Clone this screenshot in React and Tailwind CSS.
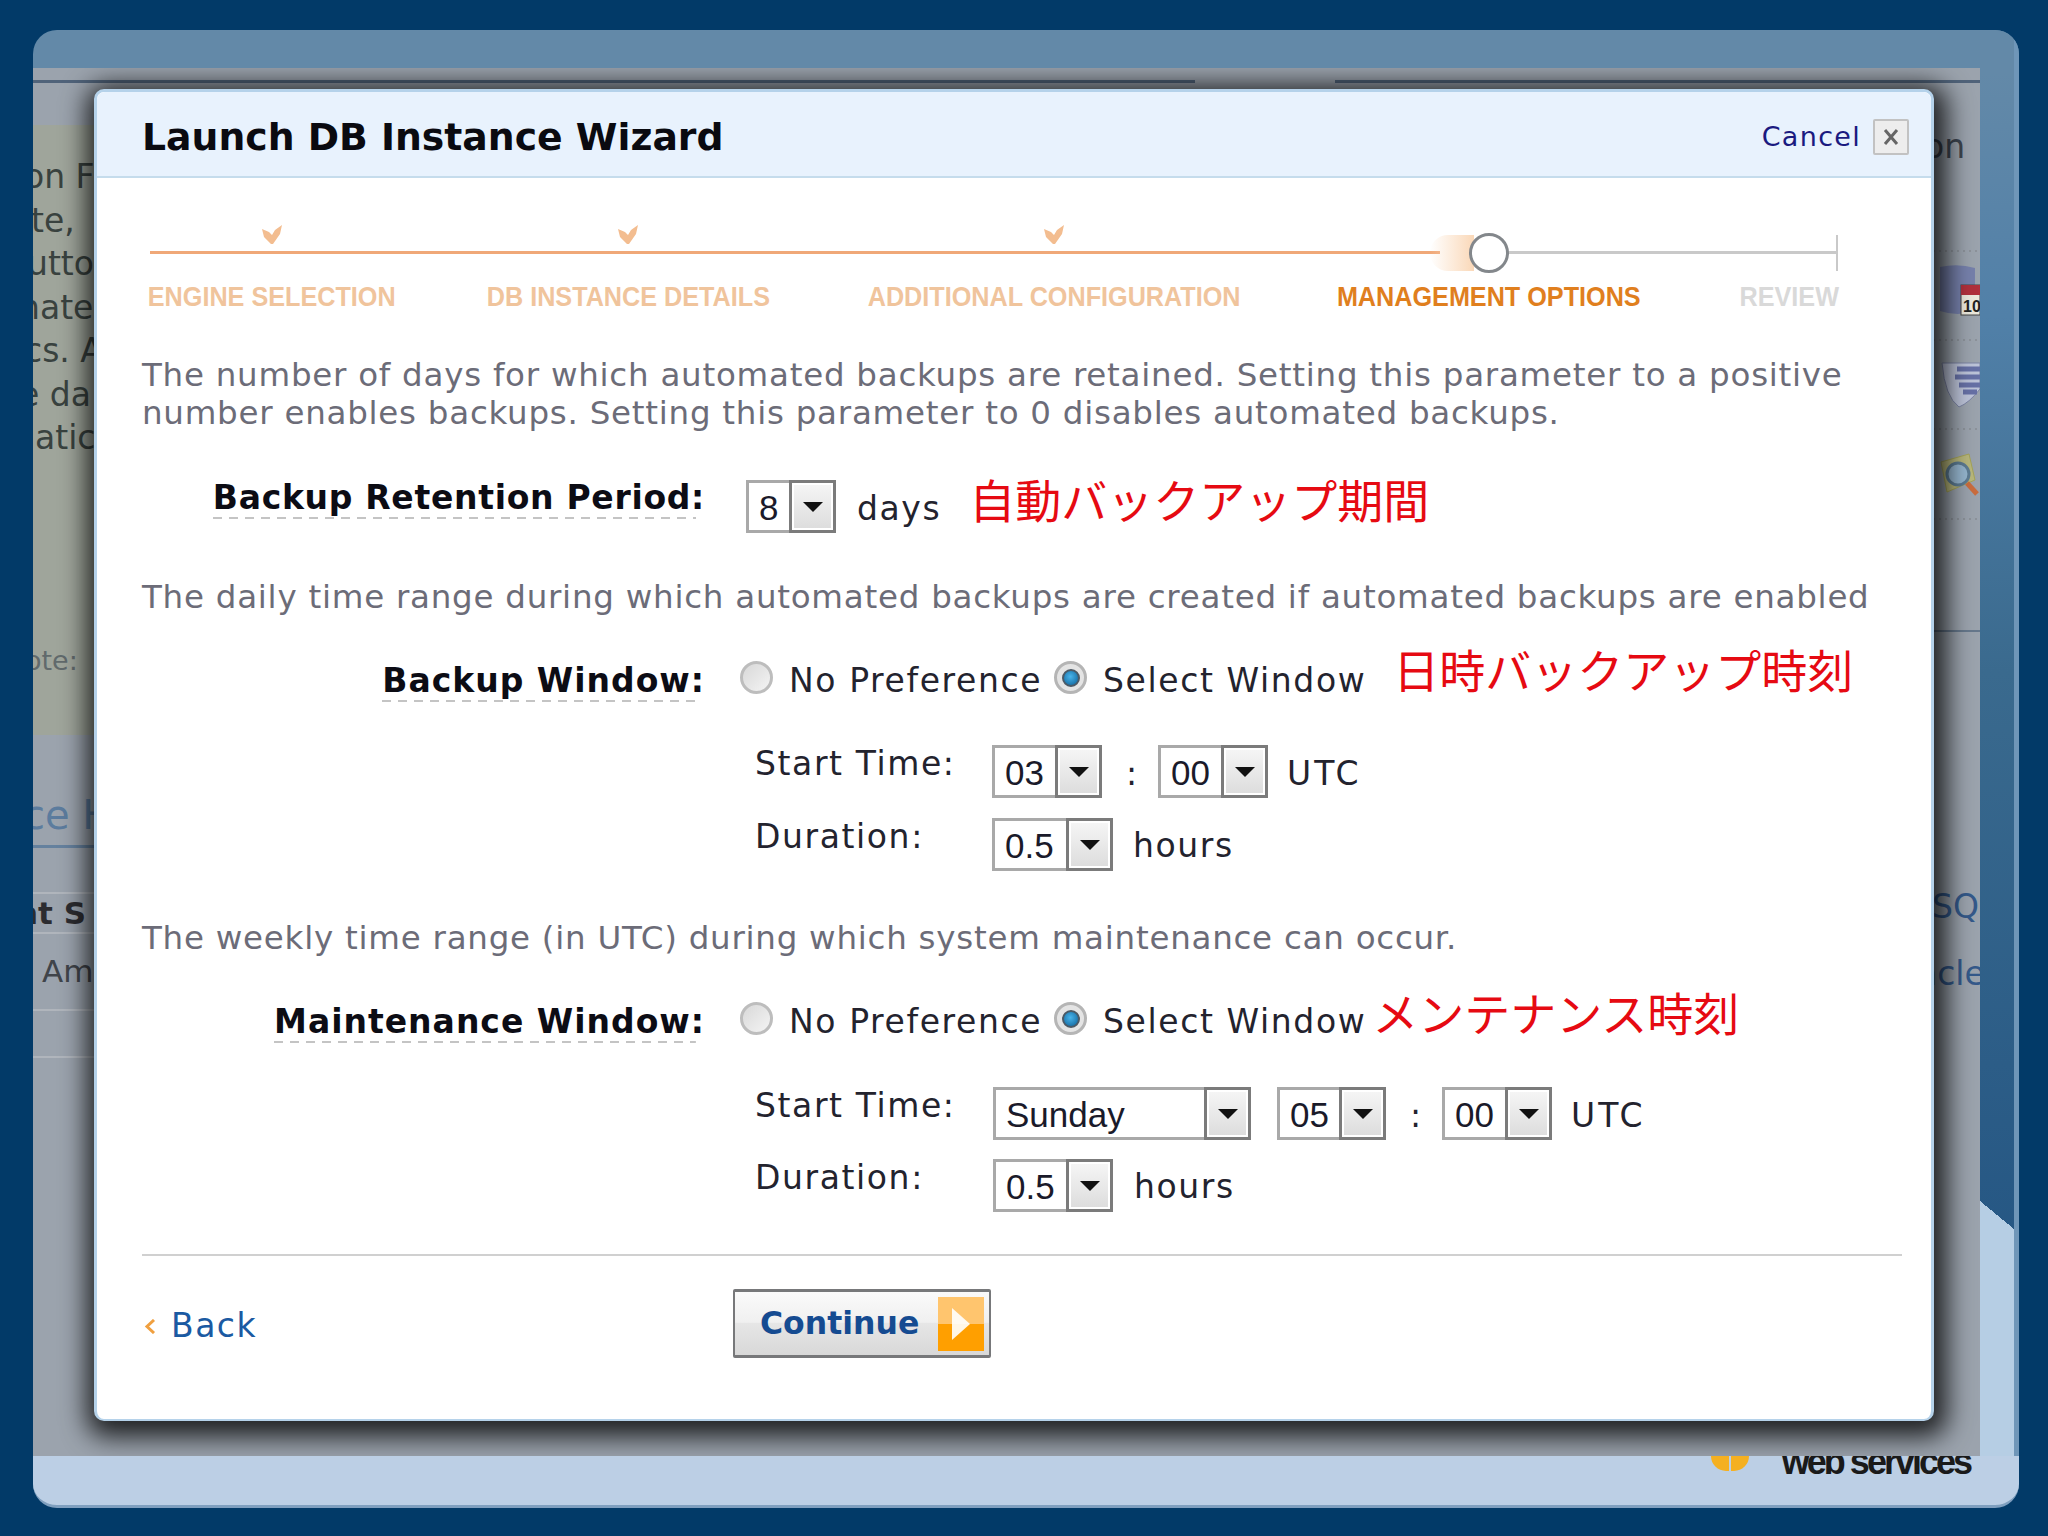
const sans = "font-['DejaVu_Sans',sans-serif]";
const arial = "font-['Liberation_Sans',Arial,sans-serif]";
const body = "text-[33px] leading-[34px] tracking-[1.6px] text-[#23232e]";
const utc = "text-[33px] leading-[34px] tracking-[3px] text-[#23232e]";
const para = "whitespace-nowrap text-[32.5px] leading-[38px] tracking-[0.75px] text-[#6c6c78]";
const red = "whitespace-nowrap font-['Noto_Sans_CJK_JP',sans-serif] text-[46px] leading-[46px] text-[#e60a12]";

function Arrow() {
  return (
    <svg width="20" height="10" viewBox="0 0 20 10">
      <path d="M0 0H20L10 10Z" fill="#111" />
    </svg>
  );
}

function Select({ value, width }) {
  return (
    <div className={`${width} ${arial} flex h-[53px] shrink-0 border-[3px] border-[#a9a9a9] bg-white text-[35px] leading-[50px] text-[#1a1a2a]`}>
      <div className="flex-1 pl-[10px]">{value}</div>
      <div className="-my-[3px] -mr-[3px] flex w-[47px] items-center justify-center border-[3px] border-[#7b7b7b] bg-[linear-gradient(#f6f6f6,#dcdcdc)] shadow-[inset_0_0_0_2px_#fff]">
        <Arrow />
      </div>
    </div>
  );
}

function Radio({ checked }) {
  if (checked) {
    return (
      <div className="flex h-[33px] w-[33px] shrink-0 items-center justify-center rounded-full border-[3px] border-[#b5b5b5] bg-[#e4e4e4]">
        <div className="h-[18px] w-[18px] rounded-full border-2 border-[#4c5a66] bg-[radial-gradient(circle_at_45%_40%,#49b4ea,#0b5f96)]" />
      </div>
    );
  }
  return (
    <div className="h-[33px] w-[33px] shrink-0 rounded-full border-[3px] border-[#bdbdbd] bg-[linear-gradient(135deg,#d8d8d8,#f4f4f4)]" />
  );
}

function Label({ text, spacing }) {
  return (
    <div className={`${spacing} w-[563px] shrink-0 text-right text-[33px] font-bold leading-[34px] text-[#0c0c14]`}>
      <span className="inline-block bg-[repeating-linear-gradient(90deg,#c4c4c4_0_9px,transparent_9px_16px)] bg-[length:100%_2px] bg-bottom bg-no-repeat pb-[4px] pr-[5px] pt-[1px]">
        {text}
      </span>
      <span className="-ml-[5px]">:</span>
    </div>
  );
}

function WindowRow({ label, note, noteClass }) {
  return (
    <div className="flex items-start">
      <Label text={label} spacing="tracking-[1px]" />
      <div className="ml-[35px] mt-[-2px]">
        <Radio />
      </div>
      <div className={`${body} ml-[16px] mt-[1px]`}>No Preference</div>
      <div className="ml-[12px] mt-[-2px]">
        <Radio checked />
      </div>
      <div className={`${body} ml-[16px] mt-[1px]`}>Select Window</div>
      <div className={`${noteClass} ${red}`}>{note}</div>
    </div>
  );
}

function Check() {
  return (
    <svg width="20" height="19" viewBox="0 0 20 19">
      <path d="M0 4 L7 7 L10 10 L13 5 L20 0 L18 9 L11 19 L9 19 L2 12Z" fill="#f3bd90" />
    </svg>
  );
}

function Step({ label, color, current, width }) {
  return (
    <div className={`${width} relative flex flex-col items-center`}>
      <div className="flex h-[61px] items-start justify-center">
        {current === "done" && <Check />}
        {current === "now" && (
          <div className="relative mt-[8px] h-[40px] w-[40px] rounded-full border-[3px] border-[#83878b] bg-white" />
        )}
      </div>
      <div className="flex w-full justify-center">
        <span className={`${color} ${arial} inline-block scale-x-[0.9] whitespace-nowrap text-[28px] font-bold leading-[22px]`}>
          {label}
        </span>
      </div>
    </div>
  );
}

function LeftStrip() {
  const lines = [
    ["on F", "-ml-[9px]"],
    ["te,", "-ml-[2px]"],
    ["utto", "-ml-[6px]"],
    ["nate", "-ml-[14px]"],
    ["cs. A", "-ml-[9px]"],
    ["e da", "-ml-[14px]"],
    ["atic", "ml-[2px]"],
  ];
  return (
    <div className="h-full w-[61px] shrink-0 overflow-hidden whitespace-nowrap">
      <div className="h-[42px]" />
      <div className="h-[610px] bg-[#9fa59b] pt-[30px] text-[33px] leading-[43.5px] text-[#39423f]">
        {lines.map(([t, c]) => (
          <div key={t} className={c}>{t}</div>
        ))}
        <div className="-ml-[8px] mt-[185px] text-[27px] leading-[32px] text-[#616a6c]">ote:</div>
      </div>
      <div className="-ml-[10px] mt-[58px] text-[40px] leading-[44px] text-[#5c7c9e]">ce H</div>
      <div className="mt-[8px] h-[3px] bg-[#65819e]" />
      <div className="mt-[44px] h-[2px] bg-[#b0b5bc]" />
      <div className="-ml-[17px] text-[31px] font-bold leading-[38px] text-[#2c2c30]">nt S</div>
      <div className="h-[2px] bg-[#b0b5bc]" />
      <div className="ml-[9px] mt-[18px] text-[31px] leading-[38px] text-[#40444a]">Am</div>
      <div className="mt-[19px] h-[2px] bg-[#b0b5bc]" />
      <div className="mt-[45px] h-[2px] bg-[#b0b5bc]" />
    </div>
  );
}

function Dotted() {
  return <div className="h-[2px] bg-[repeating-linear-gradient(90deg,#8c929a_0_2px,transparent_2px_6px)]" />;
}

function RightStrip() {
  return (
    <div className="h-full w-[47px] shrink-0 overflow-hidden whitespace-nowrap">
      <div className="h-[42px]" />
      <div className="-ml-[9px] text-[33px] leading-[44px] text-[#3d4550]">on</div>
      <div className="mt-[81px]"><Dotted /></div>
      <div className="flex h-[87px] items-center">
        <svg width="47" height="62" viewBox="0 0 47 62">
          <path d="M7 2 Q25 -2 42 3 V46 Q25 52 7 46Z" fill="#7680ab" />
          <rect x="28" y="20" width="19" height="30" fill="#ece9dd" stroke="#444" />
          <rect x="28" y="20" width="19" height="10" fill="#b0303c" />
          <text x="30" y="47" fontSize="16" fontWeight="700" fill="#222" fontFamily="Liberation Sans">10</text>
        </svg>
      </div>
      <Dotted />
      <div className="flex h-[87px] items-center">
        <svg width="47" height="48" viewBox="0 0 47 48">
          <path d="M9 2 H47 V28 Q36 42 26 46 Q12 36 9 2Z" fill="#bcc3d8" stroke="#7b83a3" />
          <path d="M24 8 H47 M22 16 H47 M26 24 H47 M30 31 H44" stroke="#6670a5" strokeWidth="5" />
        </svg>
      </div>
      <Dotted />
      <div className="flex h-[88px] items-center">
        <svg width="47" height="44" viewBox="0 0 47 44">
          <path d="M8 10 L36 2 L42 28 L14 40Z" fill="#b8b77c" stroke="#a5a458" />
          <circle cx="25" cy="22" r="11" fill="#96b6cf" stroke="#5d7c93" strokeWidth="3" />
          <path d="M34 31 L44 42" stroke="#c96c3e" strokeWidth="5" />
        </svg>
      </div>
      <Dotted />
      <div className="mt-[110px] h-[2px] bg-[#66788c]" />
      <div className="-ml-[1px] mt-[253px] text-[33px] leading-[44px] text-[#34598a]">SQ</div>
      <div className="-ml-[16px] mt-[23px] text-[33px] leading-[44px] text-[#34598a]">acle</div>
    </div>
  );
}

function Modal() {
  return (
    <div className={`${sans} absolute left-[61px] top-[21px] h-[1332px] w-[1840px] rounded-[10px] border-[3px] border-b-[2px] border-[#b5d2ea] bg-white shadow-[3px_6px_26px_10px_rgba(0,0,0,0.8)]`}>
      <div className="flex h-[86px] items-center justify-between rounded-t-[8px] border-b-2 border-[#c5dcec] bg-[#e8f2fd] pl-[45px] pr-[22px] pt-[6px]">
        <div className="text-[37.75px] font-bold text-[#0a0a10]">Launch DB Instance Wizard</div>
        <div className="flex items-center gap-[12px]">
          <div className="text-[27px] tracking-[1.3px] text-[#1a1a80]">Cancel</div>
          <div className="flex h-[36px] w-[36px] items-center justify-center rounded-[2px] border-2 border-[#c2c2c2] bg-[#ededed]">
            <svg width="16" height="16" viewBox="0 0 16 16">
              <path d="M2 1 L14 15 M14 1 L2 15" stroke="#666" strokeWidth="3" />
            </svg>
          </div>
        </div>
      </div>

      <div className="pl-[45px]">
        <div className="relative ml-[8px] mt-[47px] flex w-[1688px] justify-between">
          <div className="absolute left-0 top-[26px] h-[3px] w-[1290px] bg-[#f0a878]" />
          <div className="absolute left-[1280px] top-[10px] h-[36px] w-[44px] rounded-l-full bg-[linear-gradient(90deg,transparent,#fad8b8)]" />
          <div className="absolute left-[1358px] right-0 top-[26px] h-[3px] bg-[#c9c9c9]" />
          <div className="absolute right-0 top-[10px] h-[36px] w-[2px] bg-[#c9c9c9]" />
          <Step label="ENGINE SELECTION" color="text-[#f0c49c]" current="done" width="w-[244px]" />
          <Step label="DB INSTANCE DETAILS" color="text-[#f0c49c]" current="done" width="w-[281px] -translate-x-[3px]" />
          <Step label="ADDITIONAL CONFIGURATION" color="text-[#f0c49c]" current="done" width="w-[373px] -translate-x-[1px]" />
          <Step label="MANAGEMENT OPTIONS" color="text-[#e07f1e]" current="now" width="w-[305px] -translate-x-[2px]" />
          <Step label="REVIEW" color="text-[#d9d9d9]" width="w-[98px]" />
        </div>

        <p className={`${para} mt-[48px]`}>
          The number of days for which automated backups are retained. Setting this parameter to a positive
          <br />
          number enables backups. Setting this parameter to 0 disables automated backups.
        </p>

        <div className="mt-[48px] flex items-start">
          <Label text="Backup Retention Period" spacing="tracking-[0.7px]" />
          <div className="ml-[41px]">
            <Select value="8" width="w-[90px]" />
          </div>
          <div className={`${body} ml-[21px] mt-[12px]`}>days</div>
          <div className={`${red} -mt-[5px] ml-[28px]`}>自動バックアップ期間</div>
        </div>

        <p className={`${para} mt-[45px]`}>
          The daily time range during which automated backups are created if automated backups are enabled
        </p>

        <div className="mt-[47px]">
          <WindowRow label="Backup Window" note="日時バックアップ時刻" noteClass="ml-[27px] -mt-[18px]" />
        </div>

        <div className="ml-[613px] mt-[43px] flex items-start">
          <div className={`${body} w-[237px] pt-[2px]`}>Start Time:</div>
          <Select value="03" width="w-[110px]" />
          <div className={`${body} ml-[24px] w-[32px] pt-[12px]`}>:</div>
          <Select value="00" width="w-[110px]" />
          <div className={`${utc} ml-[19px] mt-[12px]`}>UTC</div>
        </div>
        <div className="ml-[613px] mt-[20px] flex items-start">
          <div className={`${body} w-[237px] pt-[2px]`}>Duration:</div>
          <Select value="0.5" width="w-[121px]" />
          <div className={`${body} ml-[20px] mt-[11px]`}>hours</div>
        </div>

        <p className={`${para} mt-[48px]`}>
          The weekly time range (in UTC) during which system maintenance can occur.
        </p>

        <div className="mt-[47px]">
          <WindowRow label="Maintenance Window" note="メンテナンス時刻" noteClass="ml-[6px] -mt-[16px]" />
        </div>

        <div className="ml-[613px] mt-[44px] flex items-start">
          <div className={`${body} w-[238px] pt-[2px]`}>Start Time:</div>
          <Select value="Sunday" width="w-[258px]" />
          <div className="ml-[26px]">
            <Select value="05" width="w-[109px]" />
          </div>
          <div className={`${body} ml-[24px] w-[32px] pt-[12px]`}>:</div>
          <Select value="00" width="w-[110px]" />
          <div className={`${utc} ml-[19px] mt-[12px]`}>UTC</div>
        </div>
        <div className="ml-[613px] mt-[19px] flex items-start">
          <div className={`${body} w-[238px] pt-[2px]`}>Duration:</div>
          <Select value="0.5" width="w-[120px]" />
          <div className={`${body} ml-[21px] mt-[11px]`}>hours</div>
        </div>

        <div className="mr-[29px] mt-[42px] h-[2px] bg-[#d0d0d0]" />

        <div className="mt-[33px] flex items-start">
          <div className="flex w-[591px] items-center pt-[18px] text-[33px] leading-[38px] tracking-[1.5px] text-[#1b5aa2]">
            <svg className="ml-[2px]" width="12" height="15" viewBox="0 0 12 15">
              <path d="M10 1 L3 7.5 L10 14" fill="none" stroke="#f0a040" strokeWidth="3" />
            </svg>
            <span className="ml-[15px]">Back</span>
          </div>
          <div className="flex h-[69px] w-[258px] items-center rounded-[2px] border-x-2 border-y-[3px] border-[#77787a] bg-[linear-gradient(#fafafa_0%,#f0f0f0_48%,#e6e6e6_50%,#d8d8d8_100%)] pl-[25px]">
            <span className="text-[31.5px] font-bold text-[#154b91]">Continue</span>
            <div className="ml-[19px] flex h-[54px] w-[46px] items-center justify-center bg-[linear-gradient(#ffc56e_0%,#ffc56e_50%,#ff9f00_50%,#ff9f00_100%)]">
              <svg width="18" height="32" viewBox="0 0 18 32">
                <path d="M0 0 L18 16 L0 32Z" fill="#fff" fillOpacity="0.9" />
              </svg>
            </div>
          </div>
        </div>
      </div>
    </div>
  );
}

export default function App() {
  return (
    <div className={`${sans} h-[1536px] w-[2048px] overflow-hidden bg-[#023a68] pl-[33px] pt-[30px]`}>
      <div className="flex h-[1478px] w-[1986px] flex-col overflow-hidden rounded-[24px] border-b-[3px] border-[#7f9fbf] bg-[#6389a8]">
        <div className="flex min-h-0 flex-1">
          <div className="flex w-[1947px] shrink-0 flex-col">
            <div className="h-[38px] shrink-0" />
            {/* dimmed page behind the dialog */}
            <div className="relative flex min-h-0 flex-1 flex-col overflow-hidden bg-[#9ba3ad]">
              <div className="h-[12px] shrink-0" />
              <div className="flex h-[3px] shrink-0">
                <div className="w-[1162px] bg-[#50637a]" />
                <div className="w-[140px]" />
                <div className="flex-1 bg-[#50637a]" />
              </div>
              <div className="flex min-h-0 flex-1 justify-between">
                <LeftStrip />
                <RightStrip />
              </div>
              <Modal />
            </div>
          </div>
          <div className="flex flex-1 flex-col border-r-[5px] border-[#6f96b8] bg-[linear-gradient(#6389a8_0%,#6389a8_3%,#5180a8_20%,#3a6a8e_45%,#1e5080_100%)]">
            <div className="flex-1" />
            <div className="h-[28px] bg-[linear-gradient(to_top_right,#b6cee4_50%,transparent_50%)]" />
            <div className="h-[227px] bg-[#b6cee4]" />
          </div>
        </div>
        <div className="flex h-[49px] shrink-0 justify-end overflow-hidden bg-[#bccfe5] pr-[49px]">
          <div className="mr-[33px] flex h-[15px] gap-[2px]">
            <div className="w-[18px] rounded-bl-full bg-[#f5b021]" />
            <div className="w-[18px] rounded-br-full bg-[#f5b021]" />
          </div>
          <div className="-mt-[16px] font-['Liberation_Sans',sans-serif] text-[36px] font-bold leading-[44px] tracking-[-3px] text-[#1a1a1a]">
            web services
          </div>
        </div>
      </div>
    </div>
  );
}
